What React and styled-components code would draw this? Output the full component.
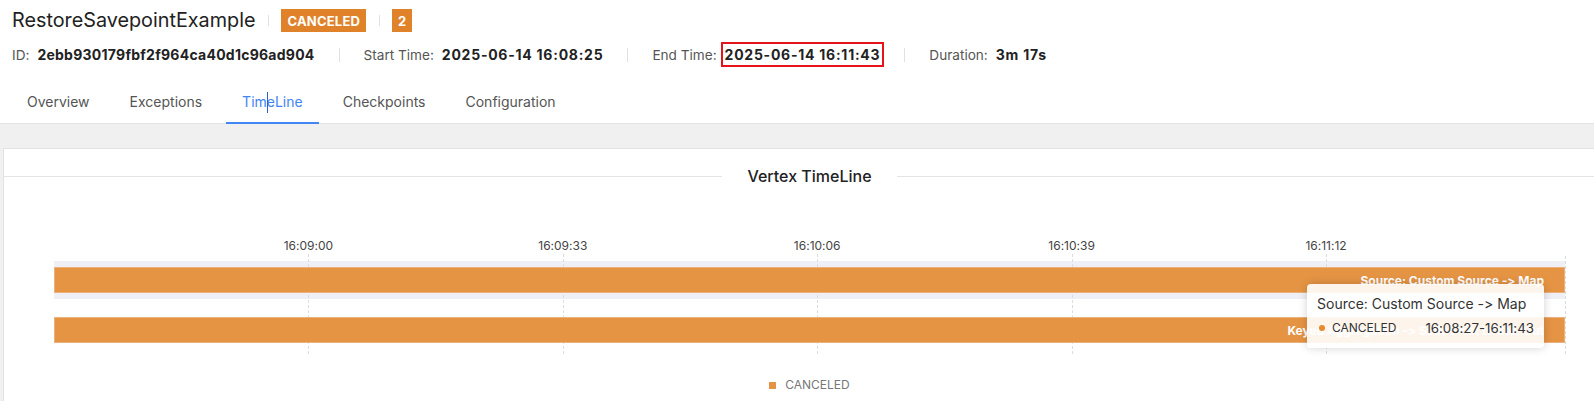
import React from 'react';
import styled, { createGlobalStyle } from 'styled-components';

const GlobalStyle = createGlobalStyle`
  html, body { margin: 0; padding: 0; background: #fff; overflow: hidden; }
  body {
    font-family: Inter, "Noto Sans", "Liberation Sans", sans-serif;
    color: #222;
    font-feature-settings: "calt" 0, "liga" 0;
    font-variant-ligatures: none;
  }
  * { box-sizing: border-box; }
`;

const Page = styled.div`
  width: 1594px;
  height: 401px;
  display: flex;
  flex-direction: column;
  overflow: hidden;
  background: #f0f0f0;
`;

const Header = styled.header`
  background: #fff;
  padding-top: 9px;
  border-bottom: 1px solid #e4e4e4;
`;

const TitleRow = styled.div`
  display: flex;
  align-items: center;
  height: 23px;
  padding-left: 12px;
`;

const Title = styled.h1`
  margin: 0;
  font-size: 19.8px;
  font-weight: 400;
  line-height: 23px;
  color: #222;
`;

const Sep = styled.span`
  width: 1px;
  height: ${(p) => (p.$small ? '11px' : '14px')};
  background: #e2e2e2;
  margin: ${(p) => (p.$small ? '0 12px 0 13px' : '0 24px')};
`;

const Badge = styled.span`
  display: inline-flex;
  align-items: center;
  height: 23px;
  padding: 0 6px;
  background: #e08229;
  color: #fff;
  font-size: 13px;
  font-weight: 700;
  letter-spacing: 0.2px;
`;

const MetaRow = styled.div`
  display: flex;
  align-items: center;
  height: 25px;
  margin-top: 10px;
  padding-left: 12px;
`;

const MetaLabel = styled.span`
  font-size: 13.6px;
  color: #555;
  margin-right: 8px;
`;

const MetaValue = styled.span`
  font-size: 14px;
  letter-spacing: ${(p) => (p.$time ? '0.75px' : '0.25px')};
  font-weight: 700;
  color: #222;
  line-height: 21px;
  border: ${(p) => (p.$boxed ? '2px solid #e5141b' : '2px solid transparent')};
  padding: 0 2px;
  margin: 0 -4px;
`;

const TabBar = styled.nav`
  display: flex;
  gap: 8px;
  padding-left: 11px;
  margin-top: 14px;
`;

const Tab = styled.div`
  position: relative;
  height: 42px;
  padding: 0 16px;
  display: flex;
  align-items: center;
  font-size: 14px;
  line-height: 22px;
  color: ${(p) => (p.$active ? '#4285f4' : '#555')};
  &::after {
    content: '';
    display: ${(p) => (p.$active ? 'block' : 'none')};
    position: absolute;
    left: 0;
    right: 0;
    bottom: -1px;
    height: 2px;
    background: #4285f4;
  }
`;

const Cursor = styled.span`
  position: absolute;
  left: 41px;
  top: 11px;
  width: 1px;
  height: 21px;
  background: #2f62c9;
`;

const Body = styled.main`
  flex: 1;
  padding: 24px 0 0 3px;
  overflow: hidden;
`;

const Card = styled.section`
  width: calc(100% + 22px);
  height: 100%;
  background: #fff;
  border: 1px solid #e2e2e2;
  border-bottom: none;
`;

const Divider = styled.div`
  display: flex;
  align-items: center;
  margin-top: 16px;
  font-size: 16px;
  font-weight: 500;
  line-height: 22px;
  color: #222;
  &::before, &::after {
    content: '';
    flex: 1;
    border-top: 1px solid #e4e4e4;
  }
  span { padding: 0 25px; }
`;

const Chart = styled.div`
  padding: 0 50px;
`;

const AxisRow = styled.div`
  position: relative;
  height: 67px;
`;

const AxisLabel = styled.span`
  position: absolute;
  bottom: 0;
  transform: translateX(-50%);
  font-size: 12px;
  line-height: 16px;
  color: #444;
  white-space: nowrap;
`;

const Plot = styled.div`
  position: relative;
  display: flex;
  flex-direction: column;
  gap: 12px;
  padding: 7px 0 5px;
`;

const GridLine = styled.span`
  position: absolute;
  top: ${(p) => (p.$edge ? '2px' : '0')};
  bottom: 0;
  width: 0;
  border-left: 1px dashed #dcdcdc;
  z-index: 1;
`;

const Row = styled.div`
  height: 38px;
  padding: 6px 0;
  background: ${(p) => (p.$striped ? '#eef0f5' : 'transparent')};
`;

const Bar = styled.div`
  position: relative;
  z-index: 2;
  height: 100%;
  display: flex;
  align-items: center;
  justify-content: flex-end;
  padding-right: 20px;
  background: #e59444;
  border: 1px solid #ecb07a;
  color: #fff;
  font-size: 12px;
  font-weight: 700;
  white-space: nowrap;
  overflow: hidden;
`;

const Tooltip = styled.div`
  position: absolute;
  top: 30px;
  right: 21px;
  width: 237px;
  z-index: 3;
  padding: 8px 10px;
  background: rgba(255, 255, 255, 0.9);
  border-radius: 4px;
  box-shadow: 0 0 10px rgba(0, 0, 0, 0.18);
  font-size: 12px;
  line-height: 24px;
  color: #333;
`;

const TipTitle = styled.div`
  font-size: 14px;
`;

const TipRow = styled.div`
  display: flex;
  align-items: center;
  justify-content: space-between;
`;

const TipState = styled.span`
  display: flex;
  align-items: center;
  gap: 7px;
  &::before {
    content: '';
    width: 6px;
    height: 6px;
    border-radius: 50%;
    background: #e58a2f;
    margin-left: 2px;
  }
`;

const TipTime = styled.span`
  font-size: 13.3px;
`;

const Legend = styled.div`
  display: flex;
  justify-content: center;
  align-items: center;
  gap: 9px;
  margin-top: 23px;
  font-size: 12px;
  line-height: 16px;
  color: #777;
`;

const LegendSwatch = styled.span`
  width: 7px;
  height: 7px;
  background: #e59444;
`;

const DOMAIN = 196; // 16:08:27 -> 16:11:43, seconds
const ticks = [
  { t: 33, label: '16:09:00' },
  { t: 66, label: '16:09:33' },
  { t: 99, label: '16:10:06' },
  { t: 132, label: '16:10:39' },
  { t: 165, label: '16:11:12' },
];
const vertices = [
  { name: 'Source: Custom Source -> Map', start: 0, end: 196 },
  { name: 'Keyed Aggregation -> Sink: Print to Std. Out', start: 0, end: 196 },
];
const pct = (t) => `${(t / DOMAIN) * 100}%`;

const tabs = ['Overview', 'Exceptions', 'TimeLine', 'Checkpoints', 'Configuration'];

export default function App() {
  return (
    <Page>
      <GlobalStyle />
      <Header>
        <TitleRow>
          <Title>RestoreSavepointExample</Title>
          <Sep $small />
          <Badge>CANCELED</Badge>
          <Sep $small />
          <Badge>2</Badge>
        </TitleRow>
        <MetaRow>
          <MetaLabel>ID:</MetaLabel>
          <MetaValue>2ebb930179fbf2f964ca40d1c96ad904</MetaValue>
          <Sep />
          <MetaLabel>Start Time:</MetaLabel>
          <MetaValue $time>2025-06-14 16:08:25</MetaValue>
          <Sep />
          <MetaLabel>End Time:</MetaLabel>
          <MetaValue $time $boxed>2025-06-14 16:11:43</MetaValue>
          <Sep />
          <MetaLabel>Duration:</MetaLabel>
          <MetaValue $time>3m 17s</MetaValue>
        </MetaRow>
        <TabBar>
          {tabs.map((t) => (
            <Tab key={t} $active={t === 'TimeLine'}>
              {t}
              {t === 'TimeLine' && <Cursor />}
            </Tab>
          ))}
        </TabBar>
      </Header>
      <Body>
        <Card>
          <Divider>
            <span>Vertex TimeLine</span>
          </Divider>
          <Chart>
            <AxisRow>
              {ticks.map((tk) => (
                <AxisLabel key={tk.label} style={{ left: pct(tk.t) }}>
                  {tk.label}
                </AxisLabel>
              ))}
            </AxisRow>
            <Plot>
              {ticks.map((tk) => (
                <GridLine key={tk.label} style={{ left: pct(tk.t) }} />
              ))}
              <GridLine $edge style={{ left: '100%' }} />
              {vertices.map((v, i) => (
                <Row key={v.name} $striped={i % 2 === 0}>
                  <Bar style={{ marginLeft: pct(v.start), width: pct(v.end - v.start) }}>
                    {v.name}
                  </Bar>
                </Row>
              ))}
              <Tooltip>
                <TipTitle>Source: Custom Source -&gt; Map</TipTitle>
                <TipRow>
                  <TipState>CANCELED</TipState>
                  <TipTime>16:08:27-16:11:43</TipTime>
                </TipRow>
              </Tooltip>
            </Plot>
            <Legend>
              <LegendSwatch />
              CANCELED
            </Legend>
          </Chart>
        </Card>
      </Body>
    </Page>
  );
}
